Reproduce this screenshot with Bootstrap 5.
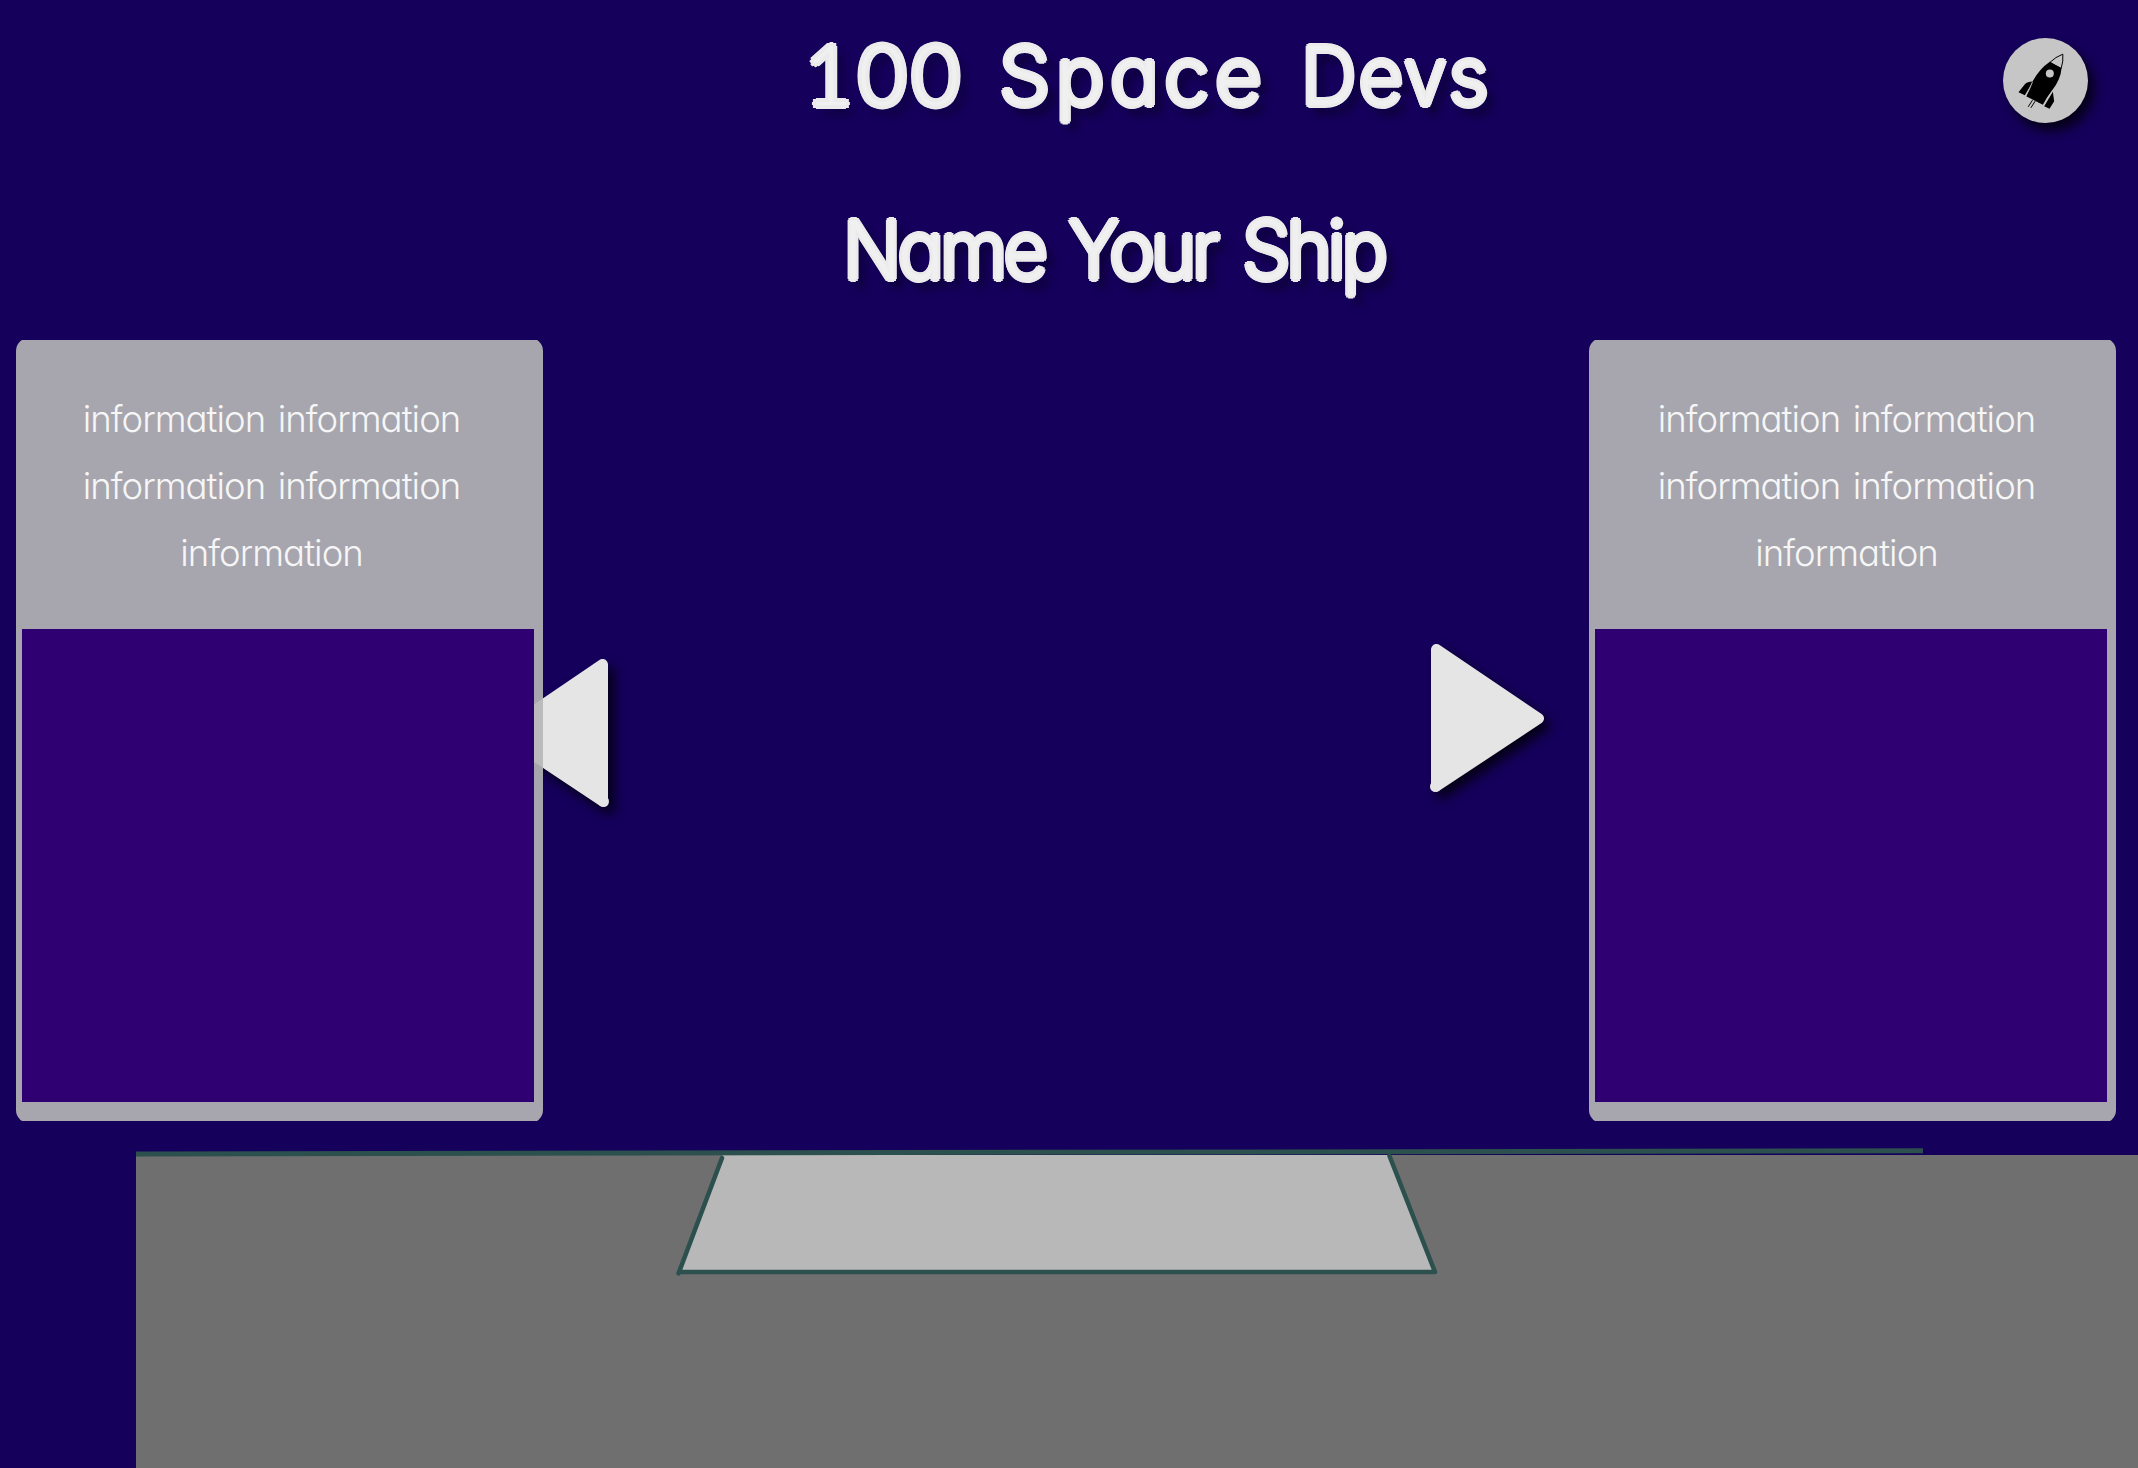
<!DOCTYPE html>
<html lang="en">
<head>
<meta charset="utf-8">
<meta name="viewport" content="width=device-width, initial-scale=1">
<title>100 Space Devs</title>
<link href="https://cdn.jsdelivr.net/npm/bootstrap@5.3.0/dist/css/bootstrap.min.css" rel="stylesheet">
<style>
body{background:#15005b;font-family:Inter,Lato,sans-serif;font-feature-settings:"cv11";overflow:hidden}
.space-app{height:1468px;width:2138px}
.top-bar{height:161px;padding:38px 50px 0 805px}
.name-bar{height:179px;padding:51px 0 0 843px}
.display-line{font-size:81px;line-height:76px;font-weight:300;color:#f0f0f0;white-space:nowrap;
text-shadow:0 -3px #ebebeb,0 3px #ebebeb,3px 0 #ebebeb,-3px 0 #ebebeb,2px 2px #ebebeb,-2px 2px #ebebeb,2px -2px #ebebeb,-2px -2px #ebebeb,8px 9px 9px rgba(0,0,0,.5)}
.digits{font-family:Lato,sans-serif;font-size:82px;font-weight:300;transform:translateY(-3px);
text-shadow:0 -4px #ebebeb,0 4px #ebebeb,4px 0 #ebebeb,-4px 0 #ebebeb,3px 3px #ebebeb,-3px 3px #ebebeb,3px -3px #ebebeb,-3px -3px #ebebeb,8px 9px 9px rgba(0,0,0,.5)}
.w-100s{width:194px;letter-spacing:6px}
.w-space{width:302px;letter-spacing:5.5px}
.w-devs{width:190px;letter-spacing:2px;transform:scaleX(.955);transform-origin:0 0}
.narrow-line{transform:scaleX(.95);transform-origin:0 0}
.w-name{width:237px;letter-spacing:-4px}
.w-your{width:183px;letter-spacing:-4.3px}
.w-ship{width:150px;letter-spacing:-4.3px}
.ship-btn{width:85px;height:85px;background:#c6c6c6;box-shadow:6px 8px 12px rgba(0,0,0,.75)}
.stage{height:781px;padding:0 22px 0 16px}
.info-panel{width:527px;padding:0 9px 19px 6px;position:relative;z-index:2;overflow:hidden}
.info-panel::before{content:"";position:absolute;inset:-2px 0;border-radius:13px;background:rgba(182,182,182,.91);z-index:-1}
.panel-text{height:289px;padding:46px 13px 0 0;font-size:36.5px;line-height:66.8px;font-weight:300;color:#f6f6f6;letter-spacing:-.95px;word-spacing:3px}
.panel-text-end{padding-right:9px}
.panel-view{height:473px;background:#2e0072}
.arrows{z-index:1;padding-top:304px}
.arrow-svg{width:115px;height:149px;overflow:visible;filter:drop-shadow(6px 7px 6px rgba(0,0,0,.75))}
.prev{margin:15px 0 0 -48px}
.next{margin-right:44px}
.floor{height:328px;margin-top:19px}
</style>
<script src="https://cdn.jsdelivr.net/npm/bootstrap@5.3.0/dist/js/bootstrap.bundle.min.js"></script>
</head>
<body>
<main class="space-app d-flex flex-column">
  <header class="top-bar d-flex justify-content-between align-items-start">
    <h1 class="display-line d-flex m-0"><span class="w-100s digits">100</span><span class="w-space">Space</span><span class="w-devs">Devs</span></h1>
    <button class="ship-btn btn p-0 border-0 rounded-circle" aria-label="Ship">
      <svg class="d-block" width="85" height="85" viewBox="68.5 53.5 255 255">
        <path d="M248 102Q226 110 209 127L243 145Q250 122 248 102Z" fill="none" stroke="#000" stroke-width="3"/>
        <path d="M209 125L244 144Q242 177 216 210Q201 229 188 254L138 228Q148 207 157 184Q178 146 209 125Z"/>
        <path d="M158 184Q141 185 134 192L115 216L134 225ZM218 215L222 243L208 266L192 258Z"/>
        <path d="M157 185Q149 207 137 228M217 213Q201 232 190 257" stroke="#c6c6c6" stroke-width="2.5" fill="none"/>
        <circle cx="209" cy="160" r="12" fill="#c6c6c6"/>
        <path d="M157 240L144 260M165 243L152 263" stroke="#000" stroke-width="3"/>
      </svg>
    </button>
  </header>
  <section class="name-bar">
    <h2 class="display-line narrow-line d-flex m-0"><span class="w-name">Name</span><span class="w-your">Your</span><span class="w-ship">Ship</span></h2>
  </section>
  <section class="stage d-flex">
    <article class="info-panel flex-shrink-0">
      <div class="panel-text text-center"><div>information information</div><div>information information</div><div>information</div></div>
      <div class="panel-view"></div>
    </article>
    <div class="arrows flex-grow-1 d-flex justify-content-between align-items-start">
      <svg class="arrow-svg prev" viewBox="0 0 115 149" fill="#e5e5e5"><path d="M107.500 5.500V142L6 74.500Z" stroke="#e5e5e5" stroke-width="11" stroke-linejoin="round"/><circle cx="108.500" cy="142.500" r="5.500"/></svg>
      <svg class="arrow-svg next" viewBox="0 0 115 149" fill="#e5e5e5"><path d="M6.500 5.500V142L108.500 74.500Z" stroke="#e5e5e5" stroke-width="11" stroke-linejoin="round"/><circle cx="5.500" cy="142.500" r="5.500"/></svg>
    </div>
    <article class="info-panel flex-shrink-0">
      <div class="panel-text panel-text-end text-center"><div>information information</div><div>information information</div><div>information</div></div>
      <div class="panel-view"></div>
    </article>
  </section>
  <svg class="floor w-100 d-block" viewBox="0 1140 2138 328">
    <path d="M136 1155H2138V1468H136Z" fill="#6f6f6f"/>
    <path d="M723 1155H1389L1435 1272H679Z" fill="#b8b8b8"/>
    <path d="M136 1154L1923 1150.700" stroke="#2b504e" stroke-width="5"/>
    <path d="M722 1158L678.500 1273.500M679 1272H1435L1389.500 1156" fill="none" stroke="#2b504e" stroke-width="4.500" stroke-linecap="round" stroke-linejoin="round"/>
  </svg>
</main>
</body>
</html>
